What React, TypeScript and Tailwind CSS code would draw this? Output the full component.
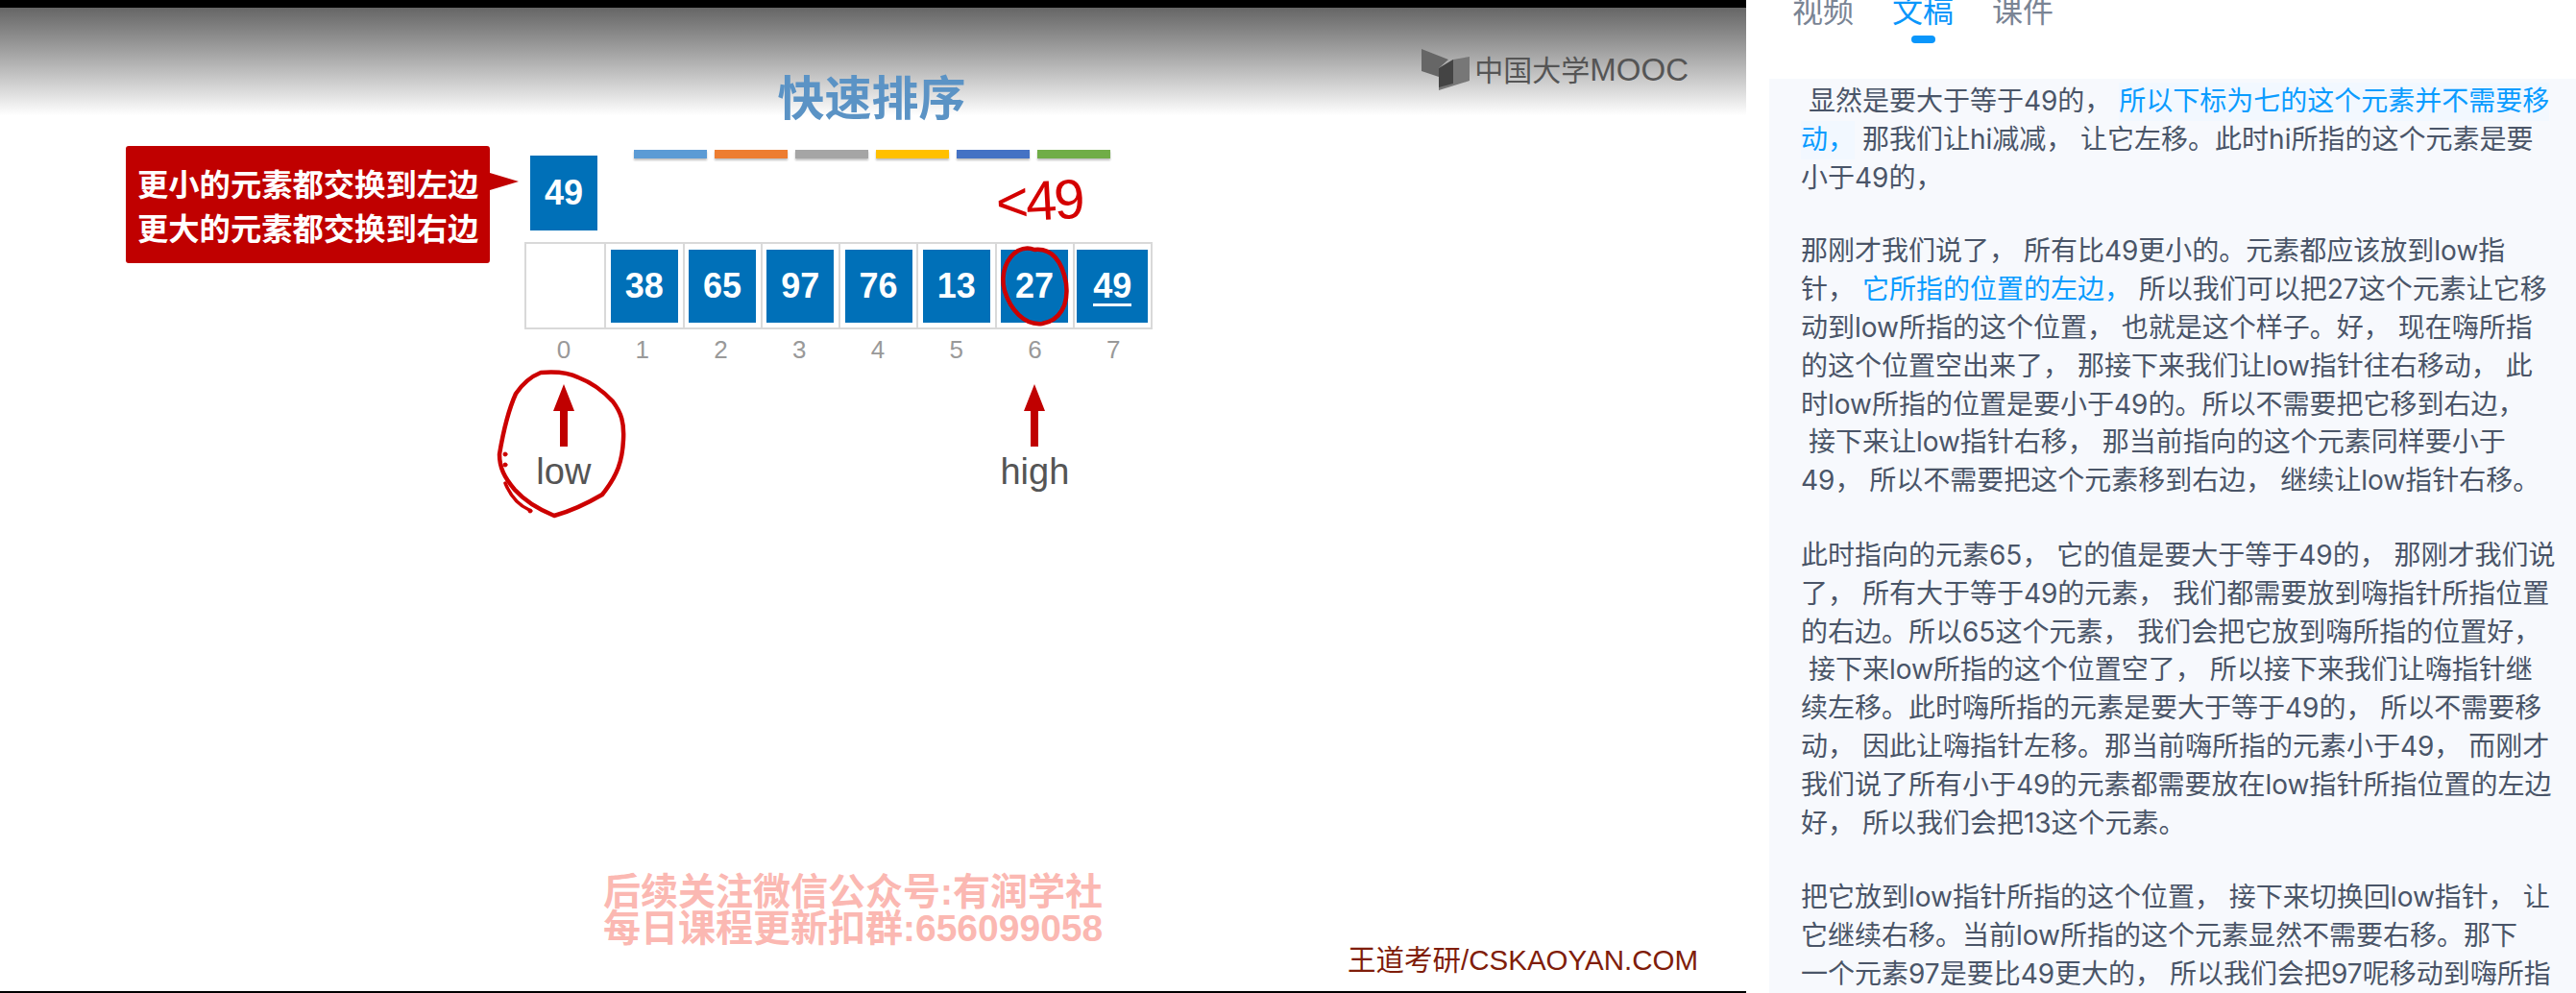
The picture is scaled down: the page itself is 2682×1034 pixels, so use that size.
const VALUES = ['', '38', '65', '97', '76', '13', '27', '49'];
const BARS = ['bg-[#5b9bd5]', 'bg-[#ed7d31]', 'bg-[#a5a5a5]', 'bg-[#ffc000]', 'bg-[#4472c4]', 'bg-[#70ad47]'];

const PARA_2 = [
  '那刚才我们说了， 所有比49更小的。元素都应该放到low指',
  null,
  '动到low所指的这个位置， 也就是这个样子。好， 现在嗨所指',
  '的这个位置空出来了， 那接下来我们让low指针往右移动， 此',
  '时low所指的位置是要小于49的。所以不需要把它移到右边，',
  ' 接下来让low指针右移， 那当前指向的这个元素同样要小于',
  '49， 所以不需要把这个元素移到右边， 继续让low指针右移。',
];

const PARA_3 = [
  '此时指向的元素65， 它的值是要大于等于49的， 那刚才我们说',
  '了， 所有大于等于49的元素， 我们都需要放到嗨指针所指位置',
  '的右边。所以65这个元素， 我们会把它放到嗨所指的位置好，',
  ' 接下来low所指的这个位置空了， 所以接下来我们让嗨指针继',
  '续左移。此时嗨所指的元素是要大于等于49的， 所以不需要移',
  '动， 因此让嗨指针左移。那当前嗨所指的元素小于49， 而刚才',
  '我们说了所有小于49的元素都需要放在low指针所指位置的左边',
  '好， 所以我们会把13这个元素。',
];

const PARA_4 = [
  '把它放到low指针所指的这个位置， 接下来切换回low指针， 让',
  '它继续右移。当前low所指的这个元素显然不需要右移。那下',
  '一个元素97是要比49更大的， 所以我们会把97呢移动到嗨所指',
];

function Mark({ children }: { children: string }) {
  return <span className="inline-block bg-[#f2f8ff] text-[#0a9cff]">{children}</span>;
}

function Pointer({ label }: { label: string }) {
  return (
    <div className="flex flex-col items-center pt-[15px]">
      <svg width="24" height="66" viewBox="0 0 24 66" className="block">
        <path d="M12 0 L23 28 L16 28 L16 65 L8 65 L8 28 L1 28 Z" fill="#c00000" />
      </svg>
      <span className="mt-[3px] text-[38px] leading-[44px] text-[#555] font-['Liberation_Sans',sans-serif]">{label}</span>
    </div>
  );
}

function Slide() {
  return (
    <div className="relative flex h-full w-[1818px] shrink-0 flex-col bg-white">
      <div className="h-[8px] bg-black" />

      {/* Header band */}
      <div className="grid h-[112px] grid-cols-[1fr_auto_1fr] bg-gradient-to-b from-[#666666] to-white">
        <div />
        <h1 className="pt-[61px] pr-[3px] text-[49px] leading-[60px] font-bold whitespace-nowrap text-[#5b93c5] font-['Noto_Sans_CJK_SC',sans-serif]">
          快速排序
        </h1>
        <div className="flex items-start justify-end gap-[5px] pt-[42px] pr-[60px]">
          <svg width="50" height="44" viewBox="0 0 50 44">
            <path d="M0 1 L28 12 L18 21 L18 30 L0 24 Z" fill="#666" />
            <path d="M50 9 L50 34 L18 44 L18 21 L33 12 Z" fill="#777" />
            <path d="M18 21 L33 12 L33 37 L18 41 Z" fill="#444" />
          </svg>
          <span className="pt-[1px] text-[30px] leading-[40px] whitespace-nowrap text-[#555] font-['Noto_Sans_CJK_SC',sans-serif]">
            中国大学<span className="font-['Liberation_Sans',sans-serif] text-[33px]">MOOC</span>
          </span>
        </div>
      </div>

      {/* Slide body */}
      <div className="flex flex-1 flex-col">
        <div className="flex items-start pt-[32px] pl-[131px]">
          <div className="relative flex h-[122px] w-[379px] flex-col justify-center rounded-[3px] bg-[#c00000] pl-[12px] text-[32.3px] leading-[46px] font-bold whitespace-nowrap text-white font-['Noto_Sans_CJK_SC',sans-serif]">
            <span>更小的元素都交换到左边</span>
            <span>更大的元素都交换到右边</span>
            <span className="absolute top-[28px] left-full h-0 w-0 border-y-[9px] border-l-[30px] border-y-transparent border-l-[#c00000]" />
          </div>

          <div className="ml-[36px] w-[654px] font-['Liberation_Sans',sans-serif]">
            <div className="flex h-[100px] items-start">
              <div className="mt-[10px] ml-[6px] flex h-[78px] w-[70px] items-center justify-center bg-[#0070b8] text-[36px] font-bold text-white">
                49
              </div>
              <div className="mt-[4px] ml-[38px] flex gap-[8px]">
                {BARS.map((bar) => (
                  <div key={bar} className={`h-[9px] w-[76px] shadow-[0_2px_2px_rgba(0,0,0,0.25)] ${bar}`} />
                ))}
              </div>
            </div>

            <div className="grid h-[91px] grid-cols-8 border-2 border-[#d9d9d9]">
              {VALUES.map((value, i) => (
                <div key={i} className="flex items-center justify-center border-l-2 border-[#d9d9d9] first:border-l-0">
                  {value && (
                    <div className={`relative flex h-[76px] items-center justify-center bg-[#0070b8] text-[36px] font-bold text-white ${i === 7 ? 'w-[74px]' : 'w-[70px]'}`}>
                      {value}
                      {i === 7 && <span className="absolute top-[56px] h-[3px] w-[40px] bg-white" />}
                    </div>
                  )}
                </div>
              ))}
            </div>

            <div className="grid h-[42px] grid-cols-8 items-center text-center text-[26px] text-[#999]">
              {VALUES.map((_, i) => (
                <span key={i}>{i}</span>
              ))}
            </div>

            <div className="grid grid-cols-8">
              <Pointer label="low" />
              <div className="col-span-5" />
              <Pointer label="high" />
            </div>
          </div>
        </div>

        {/* Footer notes */}
        <div className="mt-auto flex h-[122px] justify-between pr-[50px] pl-[628px]">
          <div className="text-[39px] leading-[38px] font-bold whitespace-nowrap text-[#fbb8b2] font-['Liberation_Sans','Noto_Sans_CJK_SC',sans-serif]">
            <div>后续关注微信公众号:有润学社</div>
            <div>每日课程更新扣群:656099058</div>
          </div>
          <div className="mt-[75px] text-[29.5px] leading-[30px] whitespace-nowrap text-[#7f1d0a] font-['Liberation_Sans','Noto_Sans_CJK_SC',sans-serif]">
            王道考研/CSKAOYAN.COM
          </div>
        </div>
      </div>

      <div className="h-[2px] bg-black" />

      {/* Handwritten annotations */}
      <span className="pointer-events-none absolute top-[177px] left-[1037px] -rotate-3 text-[58px] leading-[64px] tracking-[-3px] text-[#d40000] font-['Liberation_Sans',sans-serif]">
        &lt;49
      </span>
      <svg className="pointer-events-none absolute inset-0" width="1818" height="1034" viewBox="0 0 1818 1034" fill="none" stroke="#cc0000" strokeLinecap="round" strokeLinejoin="round">
        <path strokeWidth="4.5" d="M563 388 C575 387 590 387 602 393 C615 398 626 405 638 418 C647 430 650 440 649 458 C648 480 643 495 627 515 C610 525 595 532 577 537 C560 530 545 520 536 510 C525 497 520 487 520 473 C523 455 528 430 537 410 C545 398 553 392 563 388 Z" />
        <path strokeWidth="3.5" d="M526 503 C532 518 542 527 551 531" />
        <circle cx="526" cy="473" r="2" fill="#cc0000" />
        <circle cx="526" cy="484" r="2" fill="#cc0000" />
        <circle cx="552" cy="532" r="2" fill="#cc0000" />
        <path strokeWidth="4.5" d="M1077 260 C1095 258 1106 272 1110 295 C1113 318 1103 334 1085 337 C1066 339 1052 322 1046 303 C1041 285 1048 268 1060 261 C1066 258 1072 258 1077 260 Z" />
      </svg>
    </div>
  );
}

function Transcript() {
  return (
    <div className="flex h-full min-w-0 flex-1 flex-col bg-white font-['Inter','Noto_Sans_CJK_SC',sans-serif]">
      <div className="flex h-[82px] shrink-0 items-start gap-[40px] pl-[48px] text-[32px] leading-[44px] text-[#7a8494]">
        <span className="-mt-[10px]">视频</span>
        <div className="-mt-[10px] flex flex-col items-center text-[#0a96fb]">
          <span>文稿</span>
          <span className="mt-[3px] h-[8px] w-[25px] rounded-full bg-[#0a96fb]" />
        </div>
        <span className="-mt-[10px]">课件</span>
      </div>

      <div className="ml-[24px] flex-1 overflow-hidden bg-[#f7f9fd] pt-[4px] pl-[33px] text-[28px] leading-[39.8px] whitespace-pre text-[#4a5568]">
        <div className="mb-[37px]">
          <div>
            {' 显然是要大于等于49的， '}
            <Mark>所以下标为七的这个元素并不需要移</Mark>
          </div>
          <div>
            <Mark>动，</Mark>
            {' 那我们让hi减减， 让它左移。此时hi所指的这个元素是要'}
          </div>
          <div>小于49的，</div>
        </div>

        <div className="mb-[38px]">
          {PARA_2.map((line, i) =>
            line ? (
              <div key={i}>{line}</div>
            ) : (
              <div key={i}>
                {'针， '}
                <span className="text-[#0a9cff]">它所指的位置的左边，</span>
                {' 所以我们可以把27这个元素让它移'}
              </div>
            ),
          )}
        </div>

        <div className="mb-[38px]">
          {PARA_3.map((line) => (
            <div key={line}>{line}</div>
          ))}
        </div>

        <div>
          {PARA_4.map((line) => (
            <div key={line}>{line}</div>
          ))}
        </div>
      </div>
    </div>
  );
}

export default function App() {
  return (
    <div className="flex h-[1034px] w-[2682px] overflow-hidden bg-white">
      <Slide />
      <Transcript />
    </div>
  );
}
